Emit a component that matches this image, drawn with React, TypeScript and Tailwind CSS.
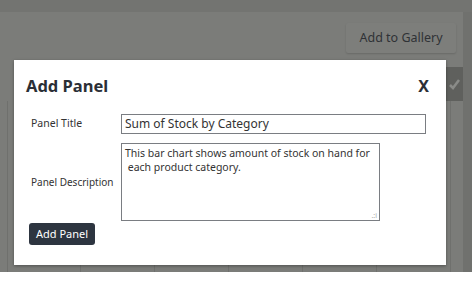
import React from "react";

export default function App() {
  const cols = [81, 155, 229, 304, 378, 453];
  return (
    <div className="relative w-[472px] h-[291px] bg-white overflow-hidden" style={{ fontFamily: '"Noto Sans", "Open Sans", sans-serif' }}>
      {/* dimmed page behind */}
      <div className="flex flex-col h-[272px] bg-[#737471]">
        <div className="h-[12px]" />
        <div className="flex flex-1">
          <div className="relative w-[463px] bg-[#7b7c79] flex flex-col">
            <div className="flex justify-end pt-[11px] pr-[7px]">
              <div className="h-[30px] w-[110px] flex items-center justify-center bg-[#7d7e7b] rounded-[2px] shadow-[0_1px_2px_rgba(0,0,0,0.15)] text-[12.5px] text-[#2f3236]">
                Add to Gallery
              </div>
            </div>
            <div className="flex-1 mt-[48px] ml-[7px] border-l border-[#6f706d] flex">
              {cols.slice(0, 5).map((c, i) => (
                <div key={c} className={i === 0 ? "w-[73px] border-r border-[#6f706d]" : "w-[74px] border-r border-[#6f706d]"} />
              ))}
              <div className="w-[74px] border-r border-[#6f706d]" />
            </div>
            <div className="absolute left-[445px] top-[55px] w-[18px] h-[34px] bg-[#5f605d] flex items-center justify-center">
              <svg width="12" height="12" viewBox="0 0 12 12"><path d="M2 7 L5 10 L11 2" stroke="#8a8b88" strokeWidth="2.5" fill="none" /></svg>
            </div>
          </div>
          <div className="w-[9px] bg-[#70716e]" />
        </div>
      </div>

      {/* modal */}
      <div className="absolute left-[14px] top-[60px] w-[432px] h-[205px] bg-white shadow-[0_1px_3px_rgba(0,0,0,0.35)] flex flex-col px-[12px]">
        <div className="flex items-center justify-between h-[50px] pt-[2px]">
          <span className="text-[16.5px] font-bold text-[#2b2f36]">Add Panel</span>
          <span className="text-[16px] font-bold text-[#2b2f36] pr-[5px]">X</span>
        </div>
        <div className="flex items-center pl-[5px] h-[20px] mt-[4px]">
          <span className="w-[90px] text-[10.5px] whitespace-nowrap text-[#333]">Panel Title</span>
          <div className="w-[305px] h-[20px] border border-[#7a7d82] flex items-center px-[3px] text-[12px] text-[#333]">
            Sum of Stock by Category
          </div>
        </div>
        <div className="flex items-center pl-[5px] mt-[9px]">
          <span className="w-[90px] text-[10px] whitespace-nowrap text-[#333]">Panel Description</span>
          <div className="relative w-[259px] h-[78px] border border-[#7a7d82] px-[3px] pt-[2px] text-[10.5px] leading-[14px] text-[#333] whitespace-pre">
            {"This bar chart shows amount of stock on hand for\n each product category."}
            <span className="absolute right-[2px] bottom-[1px] text-[7px] leading-[7px] text-[#aaa]">.:i</span>
          </div>
        </div>
        <div className="flex mt-[2px] pl-[3px]">
          <div className="h-[22px] px-[7px] bg-[#2d3540] rounded-[3px] flex items-center text-[11px] text-white">Add Panel</div>
        </div>
      </div>
    </div>
  );
}
